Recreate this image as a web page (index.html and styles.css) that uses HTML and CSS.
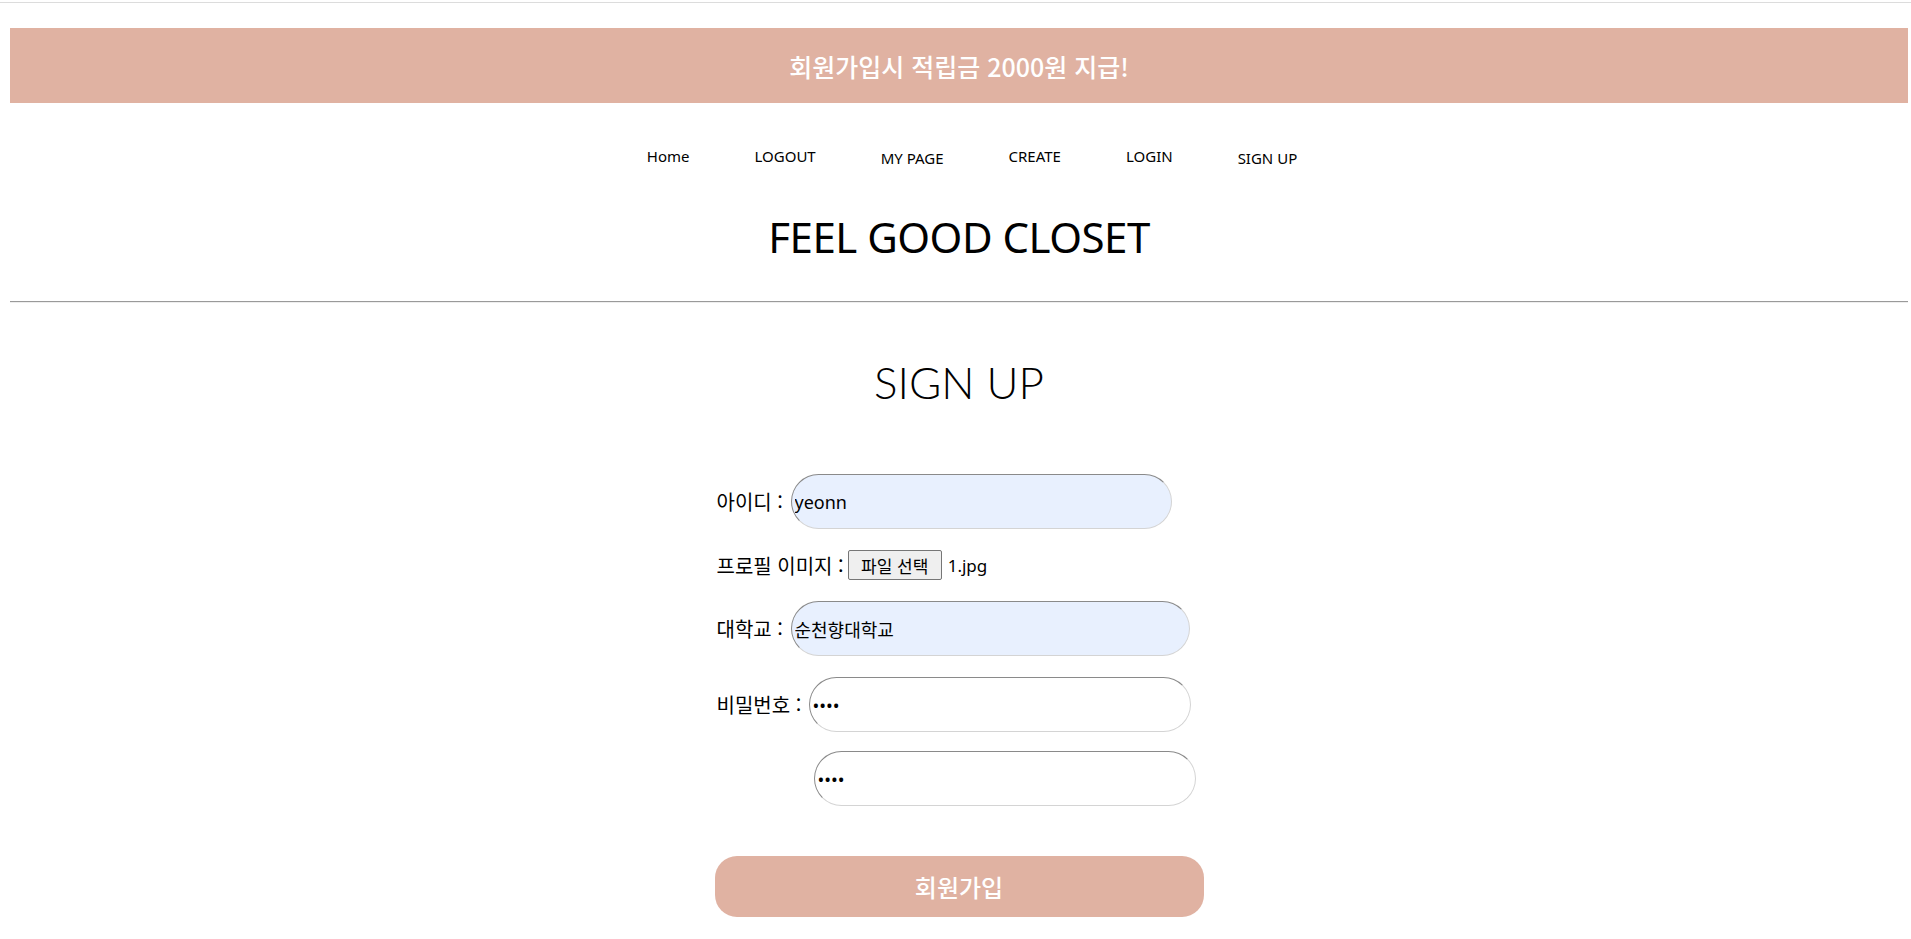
FILE: index.html
```html
<!DOCTYPE html>
<html lang="ko">
<head>
<meta charset="utf-8">
<title>FEEL GOOD CLOSET - SIGN UP</title>
<link rel="stylesheet" href="styles.css">
</head>
<body>
<div class="topline"></div>
<div class="page">
  <div class="banner">회원가입시 적립금 2000원 지급!</div>
  <nav class="nav">
    <ul class="nav-list">
      <li class="nav-item">Home</li>
      <li class="nav-item">LOGOUT</li>
      <li class="nav-item low">MY PAGE</li>
      <li class="nav-item">CREATE</li>
      <li class="nav-item">LOGIN</li>
      <li class="nav-item low">SIGN UP</li>
    </ul>
  </nav>
  <h1 class="brand">FEEL GOOD CLOSET</h1>
  <hr class="divider">
  <h2 class="page-title">SIGN UP</h2>
  <form class="signup">
    <div class="row row-id">
      <label class="lbl lbl-id">아이디 :</label>
      <input class="field field-id filled" type="text" value="yeonn">
    </div>
    <div class="row row-file">
      <label class="lbl">프로필 이미지 :</label>
      <button type="button" class="filebtn">파일 선택</button>
      <span class="filename">1.jpg</span>
    </div>
    <div class="row row-univ">
      <label class="lbl lbl-univ">대학교 :</label>
      <input class="field field-univ filled" type="text" value="순천향대학교">
    </div>
    <div class="row row-pw">
      <label class="lbl lbl-pw">비밀번호 :</label>
      <input class="field field-pw" type="password" value="1234">
    </div>
    <div class="row row-pw2">
      <span class="lbl lbl-pw2"></span>
      <input class="field field-pw2" type="password" value="1234">
    </div>
    <button type="button" class="submit">회원가입</button>
  </form>
</div>
</body>
</html>
```
FILE: styles.css
```css
html, body {
  margin: 0;
  padding: 0;
  background: #fff;
}
body {
  font-family: "Noto Sans", "Noto Sans CJK KR", sans-serif;
  color: #000;
}
.topline {
  height: 2px;
  border-bottom: 1px solid #dcdcdc;
}
.page {
  padding: 0 3px 40px 10px;
}
.banner {
  margin-top: 25px;
  height: 75px;
  background: #e0b2a2;
  color: #fff;
  display: flex;
  align-items: center;
  justify-content: center;
  font-family: "Noto Sans CJK KR", sans-serif;
  font-size: 25px;
  font-weight: 500;
}
.nav {
  margin-top: 43px;
}
.nav-list {
  list-style: none;
  margin: 0;
  padding: 0 0 0 26px;
  display: flex;
  justify-content: center;
  gap: 65px;
  height: 20px;
}
.nav-item {
  font-size: 15px;
  line-height: 20px;
}
.nav-item.low {
  padding-top: 2px;
}
.brand {
  margin: 46px 0 0;
  text-align: center;
  font-size: 42px;
  font-weight: 400;
  line-height: 50px;
  letter-spacing: -0.5px;
}
.divider {
  margin: 39px 0 0;
  border: 0;
  border-top: 1px solid #9a9a9a;
  border-bottom: 1px solid #eee;
  height: 0;
}
.page-title {
  margin: 49px 0 0;
  text-align: center;
  font-family: "Lato", "Noto Sans", sans-serif;
  font-size: 44px;
  font-weight: 300;
  line-height: 60px;
}
.signup {
  width: 489px;
  margin: 62px auto 0;
  display: flex;
  flex-direction: column;
}
.row {
  display: flex;
  align-items: center;
}
.row + .row {
  margin-top: 21px;
}
.row-pw2.row {
  margin-top: 19px;
}
.lbl {
  font-family: "Noto Sans CJK KR", sans-serif;
  font-size: 20px;
  padding-left: 2px;
  white-space: nowrap;
  box-sizing: border-box;
}
.lbl-id, .lbl-univ { width: 76px; }
.lbl-pw { width: 94px; }
.lbl-pw2 { width: 99px; }
.field {
  box-sizing: border-box;
  height: 55px;
  border: 1px solid;
  border-color: #8a8a8a #d4d4d4 #d4d4d4 #8a8a8a;
  border-radius: 28px;
  padding: 0 3px;
  font-family: "Noto Sans", "Noto Sans CJK KR", sans-serif;
  font-size: 18px;
  color: #000;
  background: #fff;
  outline: none;
}
.field.filled { background: #e8f0fe; }
.field-id { width: 381px; }
.field-univ { width: 399px; }
.field-pw { width: 382px; }
.field-pw2 { width: 382px; }
.row-file { height: 30px; }
.filebtn {
  height: 30px;
  width: 94px;
  margin-left: 4px;
  background: #efefef;
  border: 1px solid #767676;
  border-radius: 2px;
  font-family: "Noto Sans CJK KR", sans-serif;
  font-size: 17px;
  padding: 0;
  color: #000;
}
.filename {
  margin-left: 6px;
  font-size: 17px;
}
.submit {
  margin-top: 50px;
  height: 61px;
  width: 489px;
  border: 0;
  border-radius: 22px;
  background: #e0b2a2;
  color: #fff;
  font-family: "Noto Sans CJK KR", sans-serif;
  font-size: 24px;
  font-weight: 500;
}
```
